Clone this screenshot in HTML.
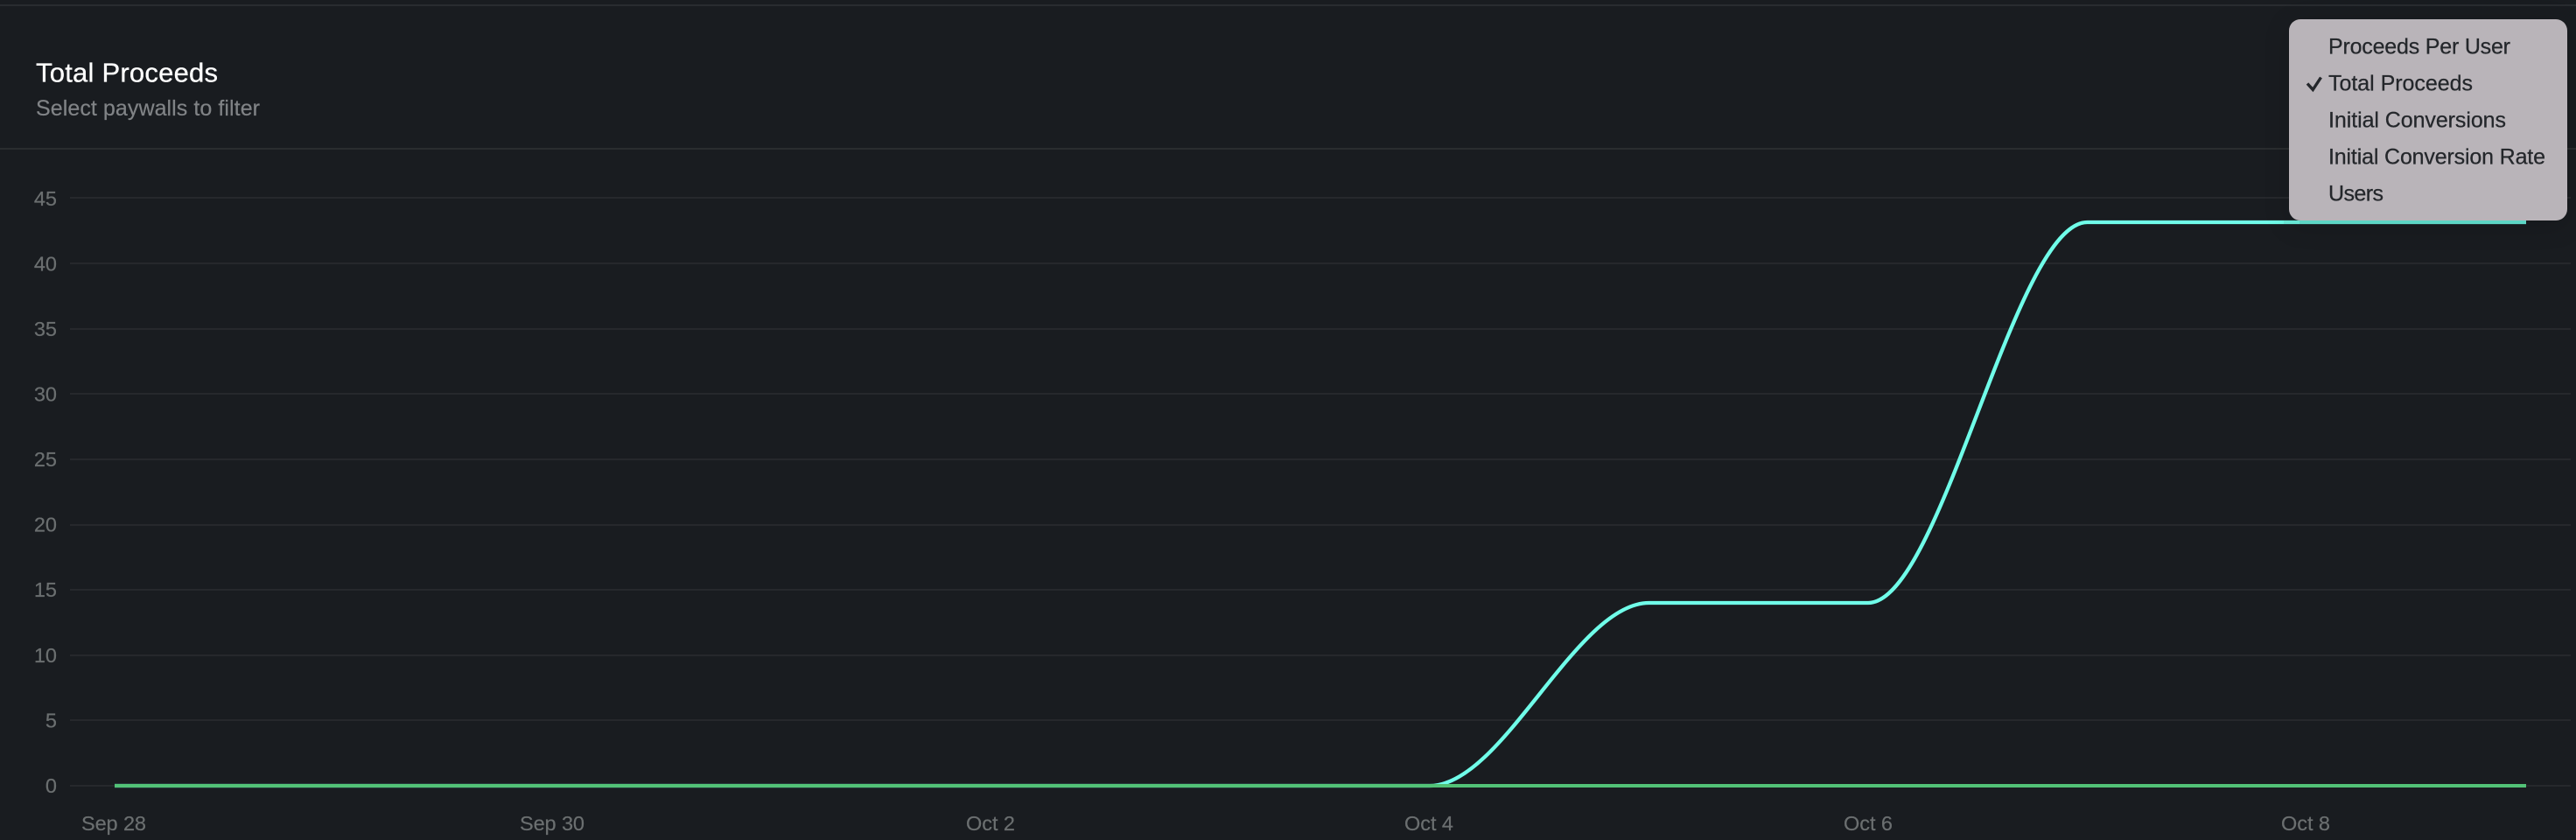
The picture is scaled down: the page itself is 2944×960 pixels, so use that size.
<!DOCTYPE html>
<html lang="en">
<head>
<meta charset="utf-8">
<title>Total Proceeds</title>
<style>
html,body{margin:0;padding:0;background:#191c20;width:2944px;height:960px;overflow:hidden}
svg{position:absolute;left:0;top:0;display:block}
text{font-family:"Liberation Sans",sans-serif}
.y{font-size:23.500px;fill:#6b6f70;stroke:#6b6f70;stroke-width:.2px;text-anchor:end}
.x{font-size:23.500px;fill:#6b6f70;stroke:#6b6f70;stroke-width:.2px}
.m{font-size:25px;fill:#24272b;stroke:#24272b;stroke-width:.25px}
#menu{position:absolute;left:2616px;top:22px;width:318px;height:230px;background:#b9b4b9;border-radius:13px;box-shadow:0 6px 30px rgba(0,0,0,.16)}
</style>
</head>
<body>
<svg width="2944" height="960" viewBox="0 0 2944 960">
<rect x="0" y="5" width="2944" height="2" fill="#292c30"/>
<rect x="0" y="169" width="2944" height="2" fill="#2a2d2f"/>
<text x="41" y="93.500" font-size="31" fill="#ffffff" stroke="#ffffff" stroke-width=".3" textLength="208" lengthAdjust="spacing">Total Proceeds</text>
<text x="41" y="132" font-size="25" fill="#808386" stroke="#808386" stroke-width=".2" textLength="256" lengthAdjust="spacing">Select paywalls to filter</text>
<g fill="#26282c">
<rect x="80" y="225" width="2858" height="2"/>
<rect x="80" y="300" width="2858" height="2"/>
<rect x="80" y="375" width="2858" height="2"/>
<rect x="80" y="449" width="2858" height="2"/>
<rect x="80" y="524" width="2858" height="2"/>
<rect x="80" y="599" width="2858" height="2"/>
<rect x="80" y="673" width="2858" height="2"/>
<rect x="80" y="748" width="2858" height="2"/>
<rect x="80" y="822" width="2858" height="2"/>
<rect x="80" y="897" width="2858" height="2"/>
</g>
<text class="y" x="65" y="235">45</text>
<text class="y" x="65" y="309.500">40</text>
<text class="y" x="65" y="384">35</text>
<text class="y" x="65" y="458.500">30</text>
<text class="y" x="65" y="533">25</text>
<text class="y" x="65" y="607.500">20</text>
<text class="y" x="65" y="682">15</text>
<text class="y" x="65" y="757">10</text>
<text class="y" x="65" y="831.500">5</text>
<text class="y" x="65" y="906">0</text>
<text class="x" x="93" y="949" textLength="74" lengthAdjust="spacing">Sep 28</text>
<text class="x" x="594" y="949" textLength="74" lengthAdjust="spacing">Sep 30</text>
<text class="x" x="1104" y="949" textLength="56" lengthAdjust="spacing">Oct 2</text>
<text class="x" x="1605" y="949" textLength="56" lengthAdjust="spacing">Oct 4</text>
<text class="x" x="2107" y="949" textLength="56" lengthAdjust="spacing">Oct 6</text>
<text class="x" x="2607" y="949" textLength="56" lengthAdjust="spacing">Oct 8</text>
<path d="M131 898H1634C1717.500 898 1801 689 1884.500 689H2135C2218.500 689 2302 254 2385.500 254H2887" fill="none" stroke="#70fde9" stroke-width="4.300"/>
<rect x="131" y="896" width="2756" height="4" fill="#52c277"/>
</svg>
<div id="menu"></div>
<svg width="2944" height="960" viewBox="0 0 2944 960">
<rect x="2610" y="252" width="18" height="4" fill="#66e6d4"/>
<rect x="2628" y="252" width="259" height="4" fill="#5dd6c5"/>
<text class="m" x="2661" y="61.500" textLength="208" lengthAdjust="spacing">Proceeds Per User</text>
<path d="M2637 95.500L2643.300 102.500L2652.500 88.500" fill="none" stroke="#24272b" stroke-width="3.400"/>
<text class="m" x="2661" y="103.500" textLength="165" lengthAdjust="spacing">Total Proceeds</text>
<text class="m" x="2661" y="145.500" textLength="203" lengthAdjust="spacing">Initial Conversions</text>
<text class="m" x="2661" y="187.500" textLength="248" lengthAdjust="spacing">Initial Conversion Rate</text>
<text class="m" x="2661" y="229.500" textLength="63" lengthAdjust="spacing">Users</text>
</svg>
</body>
</html>
